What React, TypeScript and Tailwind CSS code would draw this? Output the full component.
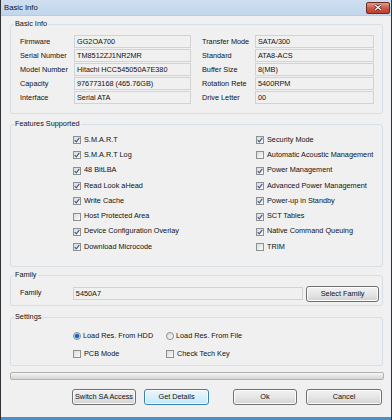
import React from 'react';

type GroupProps = {
  title: string;
  className?: string;
  children?: React.ReactNode;
};

function Group({ title, className, children }: GroupProps) {
  return (
    <div className={'relative border border-[#d5dfe5] rounded-[3px] ' + (className ?? '')}>
      <span className="absolute left-[3px] top-[-6px] px-[1px] bg-[#f0f0f0] leading-[10px]">{title}</span>
      {children}
    </div>
  );
}

function Field({ value, className }: { value: string; className?: string }) {
  return (
    <div
      className={
        'h-[13px] border border-[#d0d4d8] bg-[#f0f0f0] pl-[2px] leading-[11px] whitespace-nowrap ' +
        (className ?? '')
      }
    >
      {value}
    </div>
  );
}

function CheckBox({ checked }: { checked: boolean }) {
  return (
    <span className="w-[8px] h-[8px] shrink-0 border border-[#8e8f8f] bg-linear-to-br from-[#dadada] to-[#fbfbfb] flex items-center justify-center">
      {checked && (
        <svg width="6" height="6" viewBox="0 0 6 6">
          <path d="M0.7 3.1 L2.3 4.8 L5.3 0.8" stroke="#42599a" strokeWidth="1.2" fill="none" />
        </svg>
      )}
    </span>
  );
}

function Radio({ checked }: { checked: boolean }) {
  return (
    <span className="w-[8px] h-[8px] shrink-0 rounded-full border border-[#8e8f8f] bg-linear-to-br from-[#dadada] to-[#fbfbfb] flex items-center justify-center">
      {checked && <span className="w-[4px] h-[4px] rounded-full bg-[#1f5fae] shadow-[0_0_0_1px_#8fb8e6]" />}
    </span>
  );
}

function CheckItem({ label, checked }: { label: string; checked: boolean }) {
  return (
    <div className="flex items-center gap-[3px] h-[15.3px] whitespace-nowrap">
      <CheckBox checked={checked} />
      <span>{label}</span>
    </div>
  );
}

function Button({ label, className, focused }: { label: string; className?: string; focused?: boolean }) {
  const skin = focused
    ? 'border-[#3c7fb1] bg-linear-to-b from-[#eaf6fd] via-[#d9f0fc] to-[#bee6fd]'
    : 'border-[#707070] bg-linear-to-b from-[#f2f2f2] via-[#e6e6e6] to-[#d3d3d3]';
  return (
    <div
      className={
        'h-[16px] border rounded-[3px] flex items-center justify-center leading-[10px] shadow-[inset_0_0_0_1px_#fcfcfc] ' +
        skin +
        ' ' +
        (className ?? '')
      }
    >
      {label}
    </div>
  );
}

const leftInfo = [
  ['Firmware', 'GG2OA700'],
  ['Serial Number', 'TM8512ZJ1NR2MR'],
  ['Model Number', 'Hitachi HCC545050A7E380'],
  ['Capacity', '976773168 (465.76GB)'],
  ['Interface', 'Serial ATA'],
];

const rightInfo = [
  ['Transfer Mode', 'SATA/300'],
  ['Standard', 'ATA8-ACS'],
  ['Buffer Size', '8(MB)'],
  ['Rotation Rete', '5400RPM'],
  ['Drive Letter', '00'],
];

const leftFeatures: [string, boolean][] = [
  ['S.M.A.R.T', true],
  ['S.M.A.R.T Log', true],
  ['48 BitLBA', true],
  ['Read Look aHead', true],
  ['Write Cache', true],
  ['Host Protected Area', false],
  ['Device Configuration Overlay', true],
  ['Download Microcode', true],
];

const rightFeatures: [string, boolean][] = [
  ['Security Mode', true],
  ['Automatic Acoustic Management', false],
  ['Power Management', true],
  ['Advanced Power Management', true],
  ['Power-up in Standby', true],
  ['SCT Tables', true],
  ['Native Command Queuing', true],
  ['TRIM', false],
];

export default function App() {
  return (
    <div className="w-[392px] h-[420px] flex flex-col bg-[#f0f0f0] border-x border-[#2f3338] text-[7.3px] text-[#111] font-['Liberation_Sans',Arial,sans-serif] overflow-hidden">
      {/* title bar */}
      <div className="h-[16px] shrink-0 flex items-center justify-between pl-[3px] pr-[1px] bg-linear-to-b from-[#cfdff0] to-[#c2d6ec] border-b border-[#b7cbe2]">
        <span className="leading-[10px] text-[7.7px]">Basic Info</span>
        <div className="w-[24px] h-[12px] rounded-[2px] border border-[#6d2a24] bg-linear-to-b from-[#e29a8d] via-[#cc5a48] to-[#c03d2a] flex items-center justify-center">
          <svg width="8" height="7" viewBox="0 0 8 7">
            <path d="M1 1 L7 6 M7 1 L1 6" stroke="#3a1410" strokeWidth="2.6" />
            <path d="M1 1 L7 6 M7 1 L1 6" stroke="#ffffff" strokeWidth="1.4" />
          </svg>
        </div>
      </div>

      <div className="flex-1 flex flex-col pl-[9px] pr-[8px] pt-[8px]">
        {/* basic info */}
        <Group title="Basic Info" className="h-[90px] pt-[10px] pl-[9px] pr-[8px]">
          <div className="flex gap-[11px]">
            <div className="flex flex-col gap-[1px]">
              {leftInfo.map(([k, v]) => (
                <div key={k} className="flex items-center">
                  <span className="w-[54px] leading-[13px]">{k}</span>
                  <Field value={v} className="w-[117px]" />
                </div>
              ))}
            </div>
            <div className="flex flex-col gap-[1px]">
              {rightInfo.map(([k, v]) => (
                <div key={k} className="flex items-center">
                  <span className="w-[53px] leading-[13px]">{k}</span>
                  <Field value={v} className="w-[119px]" />
                </div>
              ))}
            </div>
          </div>
        </Group>

        {/* features */}
        <Group title="Features Supported" className="mt-[10px] h-[143px] pt-[7.5px] pl-[62px]">
          <div className="flex">
            <div className="w-[183px] flex flex-col">
              {leftFeatures.map(([l, c]) => (
                <CheckItem key={l} label={l} checked={c} />
              ))}
            </div>
            <div className="flex flex-col">
              {rightFeatures.map(([l, c]) => (
                <CheckItem key={l} label={l} checked={c} />
              ))}
            </div>
          </div>
        </Group>

        {/* family */}
        <Group title="Family" className="mt-[8px] h-[31px] pt-[10px] pl-[9px] pr-[3px]">
          <div className="flex items-center h-[15px]">
            <span className="w-[53px]">Family</span>
            <Field value="5450A7" className="w-[231px]" />
            <Button label="Select Family" className="ml-[3px] w-[73px]" />
          </div>
        </Group>

        {/* settings */}
        <Group title="Settings" className="mt-[11px] h-[49px] pt-[11px] pl-[62px]">
          <div className="flex flex-col gap-[4px]">
            <div className="flex h-[14px] items-center">
              <div className="w-[93px] flex items-center gap-[2px]">
                <Radio checked />
                <span>Load Res. From HDD</span>
              </div>
              <div className="flex items-center gap-[2px]">
                <Radio checked={false} />
                <span>Load Res. From File</span>
              </div>
            </div>
            <div className="flex h-[14px] items-center">
              <div className="w-[93px] flex items-center gap-[3px]">
                <CheckBox checked={false} />
                <span>PCB Mode</span>
              </div>
              <div className="flex items-center gap-[3px]">
                <CheckBox checked={false} />
                <span>Check Tech Key</span>
              </div>
            </div>
          </div>
        </Group>

        {/* progress */}
        <div className="mt-[6px] mr-[-1px] h-[8px] rounded-[2px] border border-[#b2b2b2] bg-linear-to-b from-[#f6f6f6] via-[#e4e4e4] to-[#d6d6d6]" />

        {/* buttons */}
        <div className="mt-[9px] flex pl-[62px]">
          <Button label="Switch SA Access" className="w-[64px]" />
          <Button label="Get Details" className="ml-[8px] w-[65px]" focused />
          <Button label="Ok" className="ml-[24px] w-[64px]" />
          <Button label="Cancel" className="ml-[9px] w-[76px]" />
        </div>
      </div>
      <div className="h-[3px] shrink-0 bg-[#4a8fc8]" />
    </div>
  );
}
